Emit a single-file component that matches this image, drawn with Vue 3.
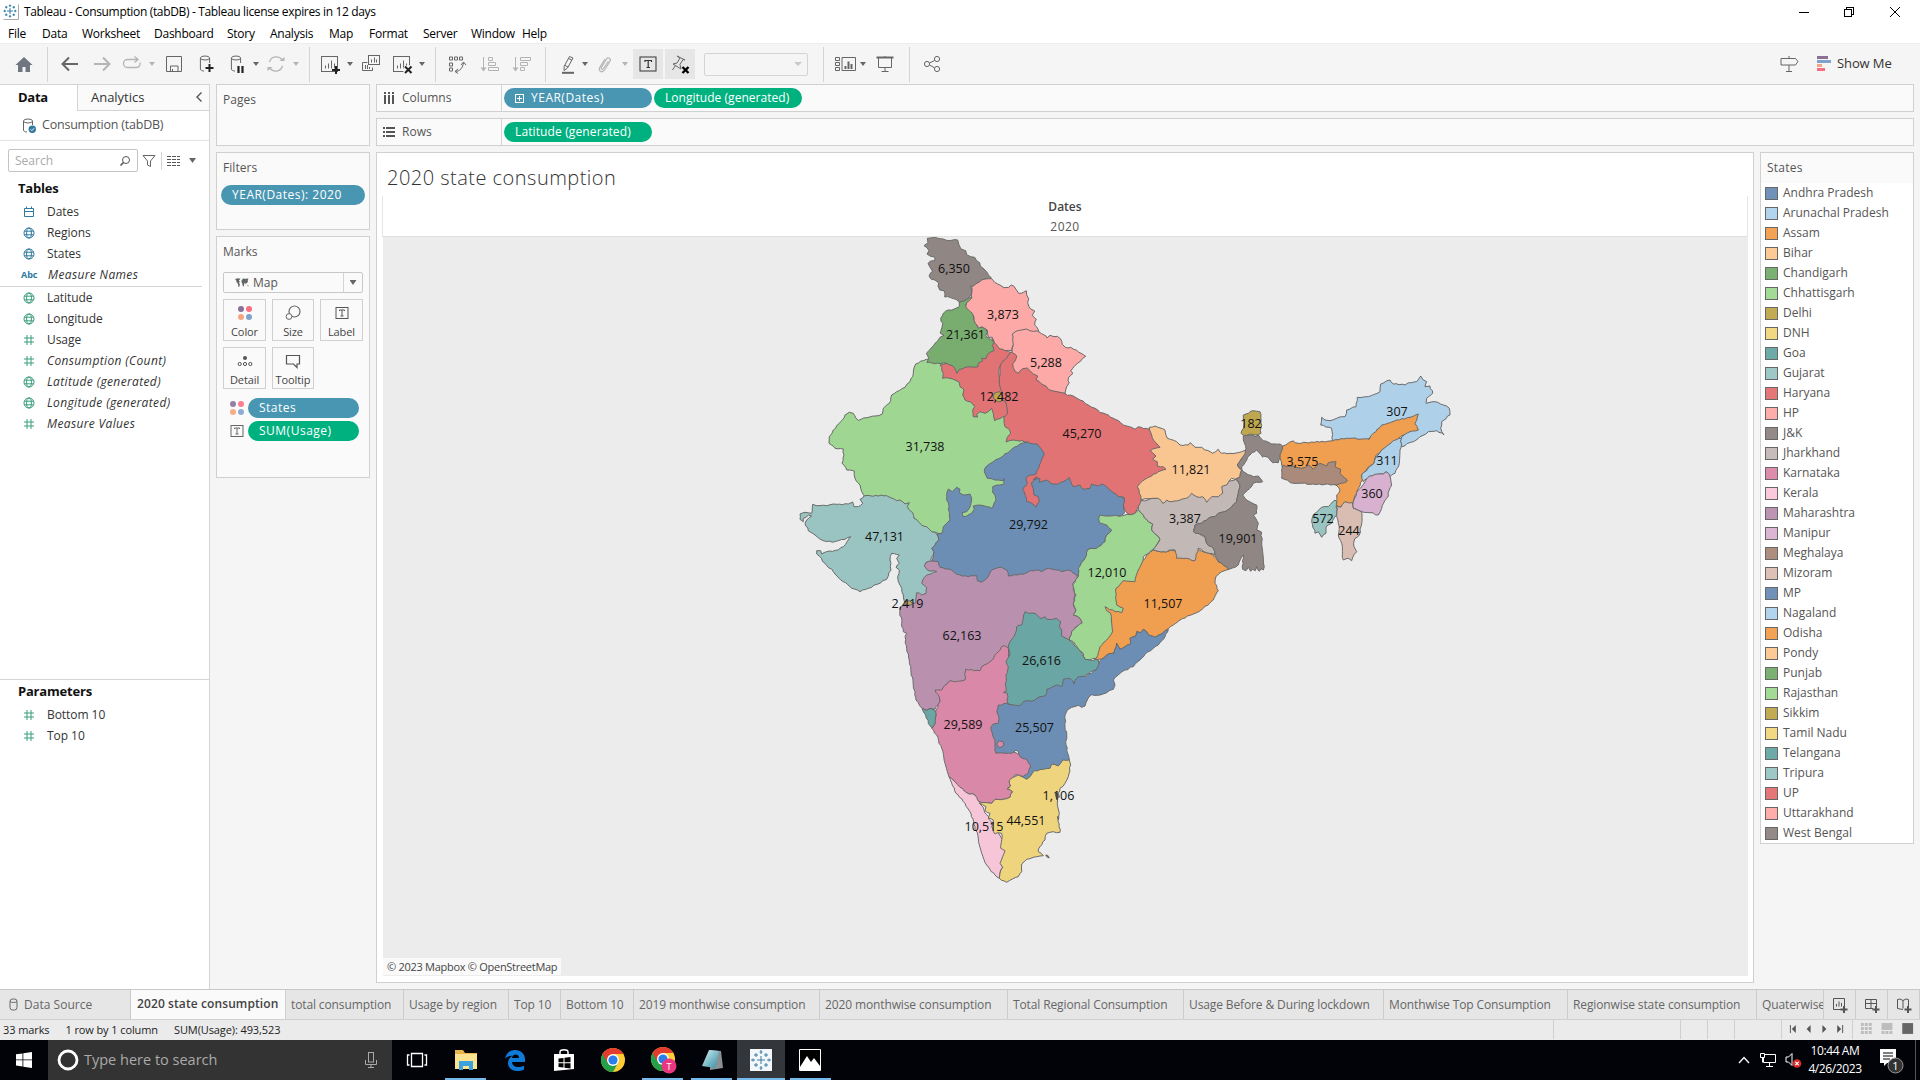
<script setup>
const ORIGINS = { A: [800, 230], B: [790, 480], C: [880, 660], D: [1080, 370], E: [1050, 590] }

// Turns "A x,y x,y B x,y" (tile letter, then points in thirds of a pixel) into a path with a slightly ragged outline.
function outline(src) {
  let o = ORIGINS.A
  const pts = []
  for (const t of src.trim().split(/\s+/)) {
    if (ORIGINS[t]) { o = ORIGINS[t]; continue }
    const [x, y] = t.split(',').map(Number)
    pts.push([o[0] + x / 3, o[1] + y / 3])
  }
  const out = []
  const noise = (a, b, k) => {
    const s = Math.sin((a[0] + b[0]) * 12.9898 + (a[1] + b[1]) * 78.233 + k * 37.7) * 43758.5453
    return (s - Math.floor(s)) * 2 - 1
  }
  pts.forEach((p, i) => {
    const q = pts[(i + 1) % pts.length]
    out.push(p)
    const dx = q[0] - p[0], dy = q[1] - p[1], len = Math.hypot(dx, dy)
    const n = Math.floor(len / 2.6)
    for (let k = 1; k < n; k++) {
      const f = k / n
      const flip = p[0] + p[1] * 0.01 < q[0] + q[1] * 0.01
      const kk = flip ? k : n - k
      const a = noise(p, q, kk) * 0.75 * (flip ? 1 : -1)
      out.push([p[0] + dx * f - (dy / len) * a, p[1] + dy * f + (dx / len) * a])
    }
  })
  return 'M' + out.map(p => p[0].toFixed(1) + ',' + p[1].toFixed(1)).join('L') + 'Z'
}

const shapes = [
  ['#9fd692', 'A 347,402 379,388 430,395 500,450 540,530 600,540 630,560 640,600 668,632 690,660 650,700 B 600,110 520,150 450,162 400,150 300,90 222,48 A 192,797 185,785 180,765 165,745 163,723 140,720 126,700 132,675 130,657 105,655 87,640 88,620 100,600 122,575 135,555 148,547 160,550 168,565 175,571 200,563 225,558 247,552 250,535 268,520 275,495 290,485 315,472 330,455 340,430'],
  ['#ba90af', 'B 425,243 460,240 700,250 850,270 862,292 848,310 855,345 850,375 858,390 850,405 870,415 877,428 858,440 845,455 838,480 800,500 700,520 670,560 600,600 500,650 448,650 C 178,110 180,125 165,148 150,145 140,150 126,145 108,120 100,80 92,20 88,0 B 350,505 345,470 350,460 340,455 335,430 330,390 332,380 350,366 370,330 385,300 395,270 408,247'],
  ['#99c4c1', 'B 222,48 240,47 290,47 320,62 330,60 345,72 358,68 352,80 358,90 368,98 372,115 385,125 395,135 410,140 425,155 440,162 447,180 435,195 425,205 432,215 422,240 408,247 403,258 412,270 440,275 425,281 410,285 398,300 395,310 410,322 408,340 395,345 380,338 378,352 378,368 360,375 345,370 340,345 335,325 325,305 323,290 328,270 318,262 328,250 320,235 328,225 305,220 300,240 303,270 290,298 270,310 235,325 210,335 185,325 160,305 130,275 105,250 80,222 80,212 92,212 95,222 110,215 145,210 160,200 182,170 165,178 145,182 128,187 100,182 75,165 55,152 45,130 50,120 65,108 55,105 40,115 40,125 30,118 30,102 45,97 65,100 68,73 90,77 110,77 140,73 175,72 188,66 192,80 205,80 218,70 210,58'],
  ['#6c8eb4', 'B 440,162 455,160 460,140 470,130 480,120 478,105 477,80 470,60 470,40 475,27 487,35 500,22 510,28 508,38 520,45 540,42 545,55 543,70 538,85 530,95 516,98 520,110 545,100 553,88 550,78 565,75 590,80 605,85 612,70 618,60 615,45 608,38 608,20 630,15 643,12 A 612,745 608,752 585,750 562,745 553,725 560,708 580,695 610,678 635,658 660,642 680,637 712,642 760,690 800,700 B 940,10 1003,55 1003,100 985,108 960,115 960,125 965,150 950,165 945,185 920,205 895,208 885,235 870,260 865,290 850,280 835,270 815,275 800,270 775,265 755,275 740,270 720,272 700,283 655,288 650,270 635,262 605,270 595,290 575,307 562,302 560,287 535,290 500,283 485,270 450,262 445,245 425,243 432,215 425,205 435,195 447,180'],
  ['#f09e50', 'D 218,540 250,545 350,535 380,548 400,555 415,575 430,585 447,598 425,605 408,620 405,640 415,662 400,690 E 460,55 440,68 412,78 390,90 370,105 355,116 345,122 335,132 315,142 300,137 290,125 280,118 272,128 260,125 258,138 240,145 242,162 225,170 210,178 200,160 192,190 175,192 155,207 132,208 120,180 150,120 150,60 D 100,700 100,640 160,600'],
  ['#9fd692', 'B 930,105 960,108 1003,106 D 150,434 165,430 175,420 185,430 205,455 218,462 215,480 240,508 230,525 218,540 190,560 185,580 175,600 165,635 130,632 108,655 108,690 110,705 130,715 125,728 105,725 75,710 B 945,380 950,392 962,400 965,430 968,455 950,480 930,500 918,535 900,540 885,538 880,520 865,508 850,485 838,480 845,455 860,440 877,428 870,415 850,405 858,390 850,370 858,345 848,315 858,298 865,290 865,265 885,235 895,208 920,205 945,185 950,165 965,150 950,135 928,128 926,115'],
  ['#c2b8b5', 'D 175,418 178,395 240,380 440,335 468,328 480,345 475,370 470,395 455,410 435,425 415,430 405,440 385,445 365,460 345,465 340,480 355,490 375,500 380,520 400,535 405,555 380,548 355,535 345,572 320,565 290,565 285,540 250,545 218,540 240,508 215,480 218,462 205,455 185,430'],
  ['#f9c692', 'D 208,172 225,168 255,180 262,205 290,215 300,225 325,225 330,218 345,232 365,232 375,240 398,250 415,238 425,250 450,250 485,245 498,240 500,250 482,270 472,285 485,300 480,320 465,328 455,325 440,345 425,350 428,370 415,380 395,380 380,397 368,380 350,380 335,370 325,382 300,390 275,395 260,390 248,400 235,385 220,385 183,390 170,370 160,340 200,300 200,240'],
  ['#e17375', 'A 632,366 600,400 597,460 600,500 610,530 612,570 615,590 628,598 632,610 622,622 618,636 640,630 668,632 690,640 712,642 722,655 733,672 724,690 718,705 712,720 707,733 690,735 678,745 682,760 668,780 675,795 680,815 695,820 708,832 718,815 715,800 702,795 700,775 695,757 712,740 700,750 720,745 718,757 740,750 755,762 775,762 790,755 808,743 812,755 820,770 840,765 850,778 870,775 875,762 895,768 905,762 920,770 940,788 955,800 D 133,383 130,405 134,420 150,434 165,430 170,420 183,390 178,370 172,350 180,340 195,328 215,318 235,305 258,298 250,290 232,288 232,275 218,268 228,258 210,242 225,235 240,232 222,212 215,195 208,178 175,170 165,178 140,168 122,158 100,145 85,135 60,128 45,115 25,105 0,90 A 820,498 802,496 795,490 740,450 690,400 650,365'],
  ['#e17375', 'A 576,325 590,338 600,355 625,364 632,368 622,382 608,394 600,408 597,425 597,455 600,470 606,485 602,500 607,510 617,515 620,528 623,550 615,560 600,566 584,572 580,550 575,535 565,545 555,550 540,545 530,553 533,561 520,560 518,540 524,530 510,515 495,510 488,495 492,480 480,470 478,457 465,450 450,445 428,445 430,430 420,405 440,400 470,400 540,370 575,345'],
  ['#78ad6f', 'A 478,216 486,213 503,206 515,200 513,210 500,218 497,228 512,240 520,255 524,275 533,292 546,292 558,298 562,308 557,318 572,328 582,337 577,346 582,362 566,370 560,378 558,386 545,385 548,392 535,400 534,410 520,412 510,410 495,412 478,418 471,430 464,415 458,407 440,400 420,401 381,398 386,385 379,370 395,352 405,340 420,322 432,316 421,310 426,292 428,280 422,265 430,250 445,240 465,236 478,230'],
  ['#908784', 'A 372,47 384,38 382,25 405,21 430,27 455,31 473,30 477,45 483,57 497,62 500,74 512,80 524,82 530,92 539,98 541,108 552,117 562,128 574,143 566,149 553,147 545,152 530,161 520,170 511,167 515,180 515,195 503,206 490,214 478,216 468,208 452,203 434,201 432,182 419,180 414,168 416,158 404,150 393,147 387,138 392,128 398,124 390,112 384,100 392,93 404,92 405,82 390,78 381,72 387,62'],
  ['#fca9a7', 'A 515,170 528,161 545,150 555,147 575,146 584,157 600,165 612,173 626,172 634,165 641,168 649,179 656,190 664,190 679,182 680,195 686,206 683,218 686,228 691,236 704,243 697,256 703,263 709,268 704,285 715,300 718,310 680,330 640,345 635,362 615,362 600,357 590,345 580,330 577,322 565,322 562,300 545,290 535,295 526,280 522,262 515,248 497,230 500,218 515,205'],
  ['#fca9a7', 'A 637,312 648,304 665,300 680,297 700,304 712,303 725,311 738,318 741,324 750,316 762,320 772,319 782,327 787,343 796,352 812,352 830,361 843,370 857,379 847,386 833,399 822,410 812,423 819,430 806,442 804,452 808,458 800,470 795,490 780,487 765,484 756,482 745,478 738,468 722,460 708,450 713,438 700,432 690,422 682,414 668,416 655,430 645,424 640,413 638,402 645,393 650,378 636,368 637,355 640,345 638,330'],
  ['#c0a54f', 'A 582,490 600,485 607,500 603,515 592,515 580,505'],
  ['#d988a7', 'C 165,90 185,90 205,65 255,60 257,28 300,32 305,20 330,5 B 640,497 655,505 C 390,20 390,130 380,270 460,300 450,340 430,350 405,345 400,355 388,362 392,378 382,385 398,395 390,412 370,418 345,418 335,430 320,428 298,425 285,405 260,398 240,382 225,365 207,350 195,310 185,265 170,225 155,205 165,190 168,150 180,125 178,110'],
  ['#6aa7a4', 'B 705,395 715,400 735,400 750,415 765,410 770,418 800,415 812,425 808,440 815,450 815,468 828,475 838,480 850,490 868,510 885,538 900,540 925,540 930,560 800,640 C 420,150 383,130 382,100 370,97 378,95 378,45 385,20 378,5 B 660,520 655,500 660,485 672,470 680,440 695,435 700,415'],
  ['#6c8eb4', 'E 355,118 345,140 330,158 310,175 285,192 270,210 250,230 225,240 205,255 190,270 195,285 190,298 170,308 150,315 125,314 112,330 105,348 95,352 85,346 65,352 C 562,150 555,165 555,200 560,225 558,255 563,280 568,300 550,310 535,325 510,335 460,340 450,350 440,358 428,350 445,340 452,318 440,298 420,290 415,275 408,270 395,280 375,280 360,278 348,280 345,262 345,240 338,225 333,200 340,192 355,190 357,175 350,155 355,135 380,130 420,137 430,125 465,120 480,110 498,105 500,88 E 20,285 35,290 40,268 60,265 72,282 75,270 85,260 110,258 138,240 150,212 175,192 192,190 200,160 210,178 225,170 242,162 240,145 258,138 260,125 272,128 280,118 290,125 300,137 315,142 335,132 345,122'],
  ['#d988a7', 'C 350,252 358,242 370,246 372,256 358,264'],
  ['#6aa7a4', 'C 126,145 140,152 150,145 163,150 168,165 166,190 155,203 145,190 137,165'],
  ['#f6c6d8', 'C 207,350 225,365 240,382 260,398 285,405 300,428 340,500 380,560 358,655 345,645 320,615 305,580 295,535 285,500 270,455 255,430 228,400 215,370'],
  ['#efd47e', 'C 568,300 572,315 565,350 555,370 540,385 535,400 532,430 538,460 535,475 540,517 520,515 500,520 495,540 480,560 475,575 490,587 460,592 440,598 425,612 425,635 415,650 380,667 358,655 360,640 368,622 360,610 368,590 375,572 362,565 365,520 352,518 345,522 335,500 340,480 325,475 330,460 315,452 318,440 298,430 320,428 335,430 345,418 370,418 390,412 398,395 382,388 392,378 388,362 400,352 415,345 430,352 440,358 450,350 462,332 490,328 510,325 515,312 535,318 548,300'],
  ['#908784', 'D 490,198 510,195 525,200 535,195 550,212 575,222 600,222 608,228 605,255 595,278 578,278 565,262 550,258 548,262 530,240 510,255 500,270 485,290 490,305 520,320 535,318 548,335 520,340 510,355 488,375 495,385 530,405 530,430 520,435 535,460 530,480 545,487 545,525 553,590 550,600 543,596 538,604 530,590 526,602 518,598 512,604 505,592 498,602 488,598 490,555 475,585 447,598 430,585 415,575 405,555 400,535 380,520 375,500 340,485 345,465 365,460 385,445 405,440 415,430 435,425 455,410 470,395 475,370 480,345 468,328 480,320 485,300 472,285 482,270 495,250 498,235 490,210'],
  ['#bfa74f', 'D 490,135 520,122 540,125 543,150 543,190 525,195 510,192 490,196 483,190 492,165'],
  ['#aed0e8', 'D 725,142 735,150 750,152 770,145 795,140 800,120 828,110 832,82 865,80 900,65 902,42 930,30 940,42 975,45 985,38 1010,35 1022,18 1030,30 1040,35 1035,50 1050,48 1058,70 1040,85 1038,100 1065,95 1090,105 1108,115 1110,135 1085,155 1082,175 1092,195 1070,182 1045,185 1020,200 1000,215 965,230 962,205 1000,160 900,190 860,210 800,210 758,212 755,175 722,165'],
  ['#f09e50', 'D 608,228 640,213 655,220 750,213 800,205 868,208 880,190 905,165 950,150 990,142 1015,132 1005,160 1015,180 990,185 950,210 905,240 885,262 882,280 870,288 845,315 848,330 835,355 820,395 810,405 795,395 780,412 768,405 770,375 780,360 768,345 700,320 610,310 605,285 600,255'],
  ['#aa8b7b', 'D 610,285 605,300 605,325 640,340 700,342 770,345 800,335 802,330 780,310 782,298 765,290 768,275 745,278 740,288 720,280 700,298 685,285 665,295 640,288 620,290'],
  ['#aed0e8', 'D 965,205 960,240 958,280 945,310 930,320 918,305 910,312 885,315 868,320 850,335 845,315 868,290 882,280 888,262 905,240 940,212'],
  ['#d7b1cf', 'D 868,318 885,313 910,312 918,305 930,318 935,345 920,385 905,415 895,435 870,428 845,425 820,415 820,395 835,360 855,335'],
  ['#99c4c1', 'D 770,395 765,390 745,410 725,412 712,425 700,435 695,455 705,490 715,485 725,502 738,490 738,470 755,460 770,435'],
  ['#dabdb2', 'D 770,408 782,412 795,395 818,398 820,415 845,425 845,460 838,495 825,505 822,530 830,545 815,572 805,565 790,570 785,520 775,495 778,470 770,440'],
  ['#c9a560', 'B 345,364 358,362 368,370 360,376 346,374'],
  ['#8f8166', 'C 526,400 536,402 538,412 530,416'],
  ['#8f8166', 'C 497,585 503,586 508,594 500,590'],
  ['#8f8166', 'C 532,470 537,472 535,480'],
].map(([fill, s]) => ({ fill, d: outline(s) }))

const labels = [
  ['6,350', 954, 269], ['3,873', 1003, 315], ['21,361', 965.5, 335], ['5,288', 1046, 363], ['12,482', 999, 397],
  ['45,270', 1082, 434], ['31,738', 925, 447], ['29,792', 1028.5, 525], ['47,131', 884.5, 537], ['2,419', 907.5, 604],
  ['62,163', 962, 636], ['26,616', 1041.5, 661], ['12,010', 1107, 573], ['11,821', 1191, 470], ['3,387', 1185, 519],
  ['19,901', 1238, 539], ['11,507', 1163, 604], ['182', 1251, 424], ['307', 1397, 412], ['3,575', 1302.5, 462],
  ['311', 1387, 461], ['360', 1372, 494], ['572', 1323, 519], ['244', 1349, 531], ['29,589', 963, 725],
  ['25,507', 1034.5, 728], ['1,106', 1058.5, 796], ['44,551', 1026, 821], ['10,515', 984, 827],
]

const legend = [
  ['Andhra Pradesh', '#7092b8'], ['Arunachal Pradesh', '#b2d4ec'], ['Assam', '#f4a254'], ['Bihar', '#fdca96'],
  ['Chandigarh', '#7bb173'], ['Chhattisgarh', '#a3da96'], ['Delhi', '#c3ab53'], ['DNH', '#f3d882'],
  ['Goa', '#6daba8'], ['Gujarat', '#9dc8c5'], ['Haryana', '#e57779'], ['HP', '#ffadab'], ['J&K', '#948b88'],
  ['Jharkhand', '#c6bcb9'], ['Karnataka', '#dd8cab'], ['Kerala', '#facadc'], ['Maharashtra', '#be94b3'],
  ['Manipur', '#dbb5d3'], ['Meghalaya', '#ae8f7f'], ['Mizoram', '#dec1b6'], ['MP', '#7092b8'],
  ['Nagaland', '#b2d4ec'], ['Odisha', '#f4a254'], ['Pondy', '#fdca96'], ['Punjab', '#7bb173'],
  ['Rajasthan', '#a3da96'], ['Sikkim', '#c3ab53'], ['Tamil Nadu', '#f3d882'], ['Telangana', '#6daba8'],
  ['Tripura', '#9dc8c5'], ['UP', '#e57779'], ['Uttarakhand', '#ffadab'], ['West Bengal', '#948b88'],
]

const menus = ['File', 'Data', 'Worksheet', 'Dashboard', 'Story', 'Analysis', 'Map', 'Format', 'Server', 'Window', 'Help']
const menuWidths = [34, 40, 72, 73, 43, 59, 40, 54, 48, 51, 40]

const dims = [['cal', 'Dates'], ['globe', 'Regions'], ['globe', 'States'], ['abc', 'Measure Names', 1]]
const measures = [['globe', 'Latitude'], ['globe', 'Longitude'], ['hash', 'Usage'], ['hash', 'Consumption (Count)', 1],
  ['globe', 'Latitude (generated)', 1], ['globe', 'Longitude (generated)', 1], ['hash', 'Measure Values', 1]]

const sheet = (x, y) => `<rect x="${x}" y="${y}" width="16" height="15"/><path d="M${x + 4} ${y + 12}v-3M${x + 7} ${y + 12}v-5M${x + 10} ${y + 12}v-8M${x + 13} ${y + 12}v-5"/>`
const db = '<ellipse cx="10" cy="5" rx="4.6" ry="2"/><path d="M5.4 5v11c0 1.4 2 2 3.6 2M14.6 5v5"/>'
const icons = {
  home: '<path d="M11 4L2.500 12H5v7h4.500v-5h3v5H17v-7h2.500z" fill="#6f7680" stroke="none"/>',
  back: '<path d="M19 11H4M10 4.500L3.500 11l6.500 6.500" stroke-width="2"/>',
  fwd: '<path d="M3 11h15M12 4.500l6.500 6.500-6.500 6.500" stroke="#b4b4b4" stroke-width="2"/>',
  replay: '<path d="M16.500 6.500H6.500a4 4 0 0 0 0 8h9c3 0 4-2.500 3.500-5M13.500 3.500l3.500 3-3.500 3" stroke="#b4b4b4" stroke-width="1.300"/>',
  save: '<path d="M3.500 3.500h15v15h-15zM7.500 18v-5h7.500v5M9.500 18v-2"/>',
  dbplus: db + '<path d="M14.500 11v8M10.500 15h8" stroke="#222" stroke-width="2"/>',
  dbpause: db + '<path d="M12.500 13v7M16.500 13v7" stroke="#222" stroke-width="2.200"/>',
  refresh: '<path d="M4.500 9a7.200 7.200 0 0 1 12.500-2.500M17.500 13A7.200 7.200 0 0 1 5 15.500" stroke="#b4b4b4" stroke-width="1.300"/><path d="M14.500 8h5V4zM7.500 14h-5v4z" fill="#b4b4b4" stroke="none"/>',
  sheet: sheet(2.500, 3.500) + '<path d="M17 13v8M13 17h8" stroke="#222" stroke-width="2"/>',
  dup: '<path d="M7.500 9.500h-5v8h10v-3M5.500 12v4M7.500 12v4M9.500 14v2"/><rect x="8.500" y="2.500" width="11" height="9"/><path d="M11.500 9.500v-3M14.500 9.500v-5M16.500 9.500v-3"/>',
  clear: sheet(2.500, 3.500) + '<path d="M13.500 13.500l6.500 6.500M20 13.500l-6.500 6.500" stroke="#f5f5f5" stroke-width="4"/><path d="M14 13.500l6.500 6.500M20.500 13.500l-6.500 6.500" stroke="#222" stroke-width="2"/>',
  swap: '<path d="M3.500 4h3v3h-3zM8.500 4h3v3h-3zM13.500 4h3v3h-3zM3.500 10h3v3h-3zM3.500 15h3v3h-3zM9 18.500c5 0 8-4 8.500-9M15 12l2.500-3 2.500 3M12 16l-3 2.500 3 2"/>',
  asc: '<path d="M4.500 4v13M9.500 4.500h4v3h-4zM9.500 9.500h7v3h-7zM9.500 14.500h10v3h-10z" stroke="#b4b4b4"/><path d="M1.500 14.500h6l-3 4z" fill="#b4b4b4" stroke="none"/>',
  desc: '<path d="M5.500 4v13M10.500 4.500h10v3h-10zM10.500 9.500h7v3h-7zM10.500 14.500h4v3h-4z" stroke="#b4b4b4"/><path d="M2.500 14.500h6l-3 4z" fill="#b4b4b4" stroke="none"/>',
  pen: '<path d="M12.500 3.500l3.500 1.500-5.500 10-3.500 2.500.2-4.200zM8 12.500l3 1.500M11.500 5.500l3.300 1.600"/><path d="M5 19.800h12" stroke-width="2"/>',
  clip: '<path d="M14.500 8L9.500 15.500c-1 1.500-3 .5-2-1.200L12.500 6c1.500-2.300 5-.5 3.500 2.200L10.500 17c-2.500 3.500-7 1-4.500-3L11 6" stroke="#b4b4b4" stroke-width="1.200"/>',
  tbox: '<rect x="3" y="4" width="16" height="14" stroke="#333"/><path d="M8 9V7.500h6.500V9M11.200 7.500v7M9.500 14.500h3.500" stroke="#333" stroke-width="1.200"/>',
  pin: '<path d="M8 3l8 4-2-.5-3 5 1 4.500-8-5 4-1 3-5zM6.500 12.500L3.500 17"/><path d="M13.500 14l6 6M19.500 14l-6 6" stroke="#000" stroke-width="2.400"/>',
  cards: '<path d="M.5 4.500h4v3h-4zM.5 9.500h4v3h-4zM.5 14.500h4v3h-4zM7 4.500h13.500v13H7z"/><path d="M10.500 16v-3M13.500 16V8.500M16.500 16v-5" stroke-width="2"/>',
  present: '<path d="M2.500 4.500h17" stroke-width="2"/><path d="M4.500 5v9.500h13V5M11 14.500v4M7.500 18.500h7M11 3v1"/>',
  share: '<circle cx="6" cy="11" r="2.600"/><circle cx="16" cy="6" r="2.600"/><circle cx="16" cy="16" r="2.600"/><path d="M8.500 10l5-2.500M8.500 12l5 2.800"/>',
  sign: '<path d="M11 3v16M8 18.500h6"/><path d="M3 5.500h14.500l2.500 3-2.500 3.500H3z" fill="#f5f5f5"/>',
}
// [kind, gap before it in px]
const tools = [
  ['home', 13], ['|', 12], ['back', 11], ['fwd', 10], ['replay', 8], ['v-', 6], ['save', 8], ['dbplus', 10], ['dbpause', 9],
  ['v', 5], ['refresh', 6], ['v-', 6], ['|', 10], ['sheet', 9], ['v', 6], ['dup', 7], ['clear', 9], ['v', 6], ['|', 10],
  ['swap', 10], ['asc', 11], ['desc', 9], ['|', 13], ['pen', 11], ['v', 3], ['clip', 6], ['v-', 6], ['tbox', 5], ['pin', 2],
  ['sel', 9], ['|', 15], ['cards', 11], ['v', 3], ['present', 8], ['|', 13], ['share', 11],
]

const small = {
  cal: '<path d="M2.500 3.500h9v8h-9zM2.500 6.500h9M4.500 1.500v2M9.500 1.500v2"/>',
  globe: '<circle cx="7" cy="7" r="5"/><ellipse cx="7" cy="7" rx="2.400" ry="5"/><path d="M2.300 5.200h9.400M2.300 8.800h9.400"/>',
  hash: '<path d="M5 2v10M9 2v10M2 5h10M2 9h10"/>',
}

const tabs = [['total consumption', 118], ['Usage by region', 105], ['Top 10', 52], ['Bottom 10', 73], ['2019 monthwise consumption', 186],
  ['2020 monthwise consumption', 188], ['Total Regional Consumption', 176], ['Usage Before & During lockdown', 200],
  ['Monthwise Top Consumption', 184], ['Regionwise state consumption', 189], ['Quaterwise', 67]]
</script>

<template>
  <div class="app">
    <header class="titlebar">
      <svg class="logo" width="16" height="16" viewBox="0 0 16 16"><path d="M.5 15.500h15V.5" stroke="#aaa" fill="none"/><path d="M7 4v6M4 7h6M7 .5v2.500M5.800 1.700h2.400M7 11v2.500M5.800 12.300h2.400M.5 7H3M1.700 5.800v2.400M11 7h2.500M12.300 5.800v2.400M3.200 2v2.500M2 3.200h2.500M10.800 2v2.500M9.500 3.200H12M3.200 9.500V12M2 10.800h2.500M10.800 9.500V12M9.500 10.800H12" stroke="#2f7ca8" fill="none"/></svg>
      <span class="wtitle">Tableau - Consumption (tabDB) - Tableau license expires in 12 days</span>
      <svg class="winbtns" width="130" height="20" viewBox="0 0 130 20" fill="none" stroke="#000" shape-rendering="crispEdges"><path d="M9 10.500h10"/><path d="M54.500 7.500h7v7h-7zM56.500 7V5.500h7v7H62"/><path d="M100 5l10 10M110 5l-10 10" shape-rendering="auto"/></svg>
    </header>
    <nav class="menubar"><span v-for="(m, i) in menus" :key="m" :style="{ width: menuWidths[i] + 'px' }">{{ m }}</span></nav>

    <div class="toolbar">
      <template v-for="([k, g], i) in tools" :key="i">
        <i v-if="k === '|'" class="sep" :style="{ marginLeft: g + 'px' }"></i>
        <i v-else-if="k[0] === 'v'" class="caret" :class="{ dim: k === 'v-' }" :style="{ marginLeft: g + 'px' }"></i>
        <span v-else-if="k === 'sel'" class="combo" :style="{ marginLeft: g + 'px' }"><i></i></span>
        <span v-else class="tool" :class="{ on: k === 'tbox' || k === 'pin' }" :style="{ marginLeft: g + 'px' }">
          <svg width="22" height="22" viewBox="0 0 22 22" v-html="icons[k]"></svg>
        </span>
      </template>
      <span class="tool sign"><svg width="22" height="22" viewBox="0 0 22 22" v-html="icons.sign"></svg></span>
      <svg class="bars" width="15" height="16" viewBox="0 0 15 16"><path fill="#8a7096" d="M0 0h11v3H0z"/><path fill="#7fa3cc" d="M0 4h14v3H0z"/><path fill="#f5a57f" d="M0 8h5v3H0z"/><path fill="#f86e80" d="M0 12h8v3H0z"/></svg>
      <span class="showme">Show Me</span>
    </div>

    <main class="work">
      <aside class="side">
        <div class="sidetabs"><div class="tdata">Data</div><div class="tana">Analytics<svg width="8" height="12" viewBox="0 0 8 12"><path d="M6.500 1.500L2 6l4.500 4.500" fill="none" stroke="#555" stroke-width="1.400"/></svg></div></div>
        <div class="source">
          <svg width="16" height="18" viewBox="0 0 16 18"><g fill="none" stroke="#666"><ellipse cx="6" cy="4" rx="4.500" ry="2"/><path d="M1.500 4v9c0 1.300 1.500 2 3.500 2M10.500 4v4"/></g><circle cx="10.300" cy="12.300" r="3.700" fill="#2f7a9e"/><path d="M8.600 12.300l1.300 1.300 2.200-2.300" stroke="#fff" fill="none"/></svg>
          <span>Consumption (tabDB)</span>
        </div>
        <div class="searchrow">
          <div class="search"><span>Search</span><svg width="12" height="12" viewBox="0 0 12 12" fill="none" stroke="#555"><circle cx="7" cy="5" r="3.500"/><path d="M4.500 7.500L1.500 10.500" stroke-width="1.600"/></svg></div>
          <svg class="funnel" width="14" height="14" viewBox="0 0 14 14" fill="none" stroke="#666"><path d="M1 1.500h12L8.500 7v5.500l-3-1.500V7z"/></svg>
          <i class="vline"></i>
          <svg width="13" height="10" viewBox="0 0 13 10" stroke="#555" shape-rendering="crispEdges"><path d="M0 .5h13M0 3.500h13M0 6.500h13M0 9.500h13" stroke-dasharray="4 1"/></svg>
          <i class="caret big"></i>
        </div>
        <h4>Tables</h4>
        <ul class="fields dims">
          <li v-for="f in dims" :key="f[1]"><span v-if="f[0] === 'abc'" class="abc">Abc</span><svg v-else width="14" height="14" viewBox="0 0 14 14" v-html="small[f[0]]"></svg><span :class="{ it: f[2] }">{{ f[1] }}</span></li>
        </ul>
        <ul class="fields mea">
          <li v-for="f in measures" :key="f[1]"><svg width="14" height="14" viewBox="0 0 14 14" v-html="small[f[0]]"></svg><span :class="{ it: f[2] }">{{ f[1] }}</span></li>
        </ul>
        <div class="params">
          <h4>Parameters</h4>
          <ul class="fields mea2">
            <li v-for="p in ['Bottom 10', 'Top 10']" :key="p"><svg width="14" height="14" viewBox="0 0 14 14" v-html="small.hash"></svg><span>{{ p }}</span></li>
          </ul>
        </div>
      </aside>

      <section class="cards">
        <div class="card pages"><h5>Pages</h5></div>
        <div class="card filters"><h5>Filters</h5><div class="pill blue">YEAR(Dates): 2020</div></div>
        <div class="card marks">
          <h5>Marks</h5>
          <div class="marktype">
            <svg width="14" height="10" viewBox="0 0 14 10" fill="#666"><path d="M0 1l3-.8L5.500.8 4 2.500 4.800 4l-1 1L5 6l-.8 3H3.500L3 6 1.500 4 1.200 2.500zM6.500 2.500L8 .5l2 .3L13.500.6l-.8 2 .3 1.400-1.500 1-.5 1.500L10 5 9.200 5.500 9 8 8 8.500 7.200 5.500 6.500 4zM12 7.500l1.500-.5-.3 1.500z"/></svg>
            <span>Map</span><b><i class="caret big"></i></b>
          </div>
          <div class="mbtns">
            <div><svg width="16" height="16" viewBox="0 0 16 16"><circle cx="4" cy="4" r="3" fill="#8a7096"/><circle cx="12" cy="4" r="3" fill="#f86e80"/><circle cx="4" cy="12" r="3" fill="#f5a57f"/><circle cx="12" cy="12" r="3" fill="#7fa3cc"/></svg><span>Color</span></div>
            <div><svg width="16" height="16" viewBox="0 0 16 16" fill="none" stroke="#666"><circle cx="9.500" cy="6.500" r="5.500" stroke-width="1.200"/><circle cx="4" cy="11.500" r="2.900" fill="#fafafa"/></svg><span>Size</span></div>
            <div><svg width="16" height="16" viewBox="0 0 16 16" fill="none" stroke="#555"><rect x="2" y="2.500" width="12" height="11"/><path d="M5.500 6V5h5v1M8 5v6M6.500 11h3"/></svg><span>Label</span></div>
            <div><svg width="16" height="16" viewBox="0 0 16 16" fill="none" stroke="#555"><circle cx="8" cy="5" r="2" fill="#555" stroke="none"/><circle cx="2.700" cy="11" r="1.600"/><circle cx="8" cy="11" r="1.600"/><circle cx="13.300" cy="11" r="1.600"/></svg><span>Detail</span></div>
            <div><svg width="16" height="16" viewBox="0 0 16 16" fill="none" stroke="#555" stroke-width="1.200"><path d="M1.500 2.500h13v8.500h-2.500v3.500L8.500 11h-7z"/></svg><span>Tooltip</span></div>
          </div>
          <div class="enc"><svg width="16" height="16" viewBox="0 0 16 16"><circle cx="4" cy="4" r="3" fill="#957fa2"/><circle cx="12" cy="4" r="3" fill="#fa7f8e"/><circle cx="4" cy="12" r="3" fill="#f5ae87"/><circle cx="12" cy="12" r="3" fill="#8eadd2"/></svg><div class="pill blue">States</div></div>
          <div class="enc"><svg width="16" height="16" viewBox="0 0 16 16" fill="none" stroke="#666"><rect x="2" y="2.500" width="12" height="11"/><path d="M5.500 6V5h5v1M8 5v6M6.500 11h3"/></svg><div class="pill green">SUM(Usage)</div></div>
        </div>
      </section>

      <section class="main">
        <div class="shelf">
          <div class="sname"><svg width="12" height="12" viewBox="0 0 12 12" fill="#555"><path d="M1 0h2v2H1zM5 0h2v2H5zM9 0h2v2H9zM1 3h2v9H1zM5 3h2v9H5zM9 3h2v9H9z"/></svg>Columns</div>
          <div class="pill blue yr"><svg width="9" height="9" viewBox="0 0 9 9" fill="none" stroke="#fff" shape-rendering="crispEdges"><path d="M.5.5h8v8h-8zM2 4.500h5M4.500 2v5"/></svg>YEAR(Dates)</div>
          <div class="pill green">Longitude (generated)</div>
        </div>
        <div class="shelf">
          <div class="sname"><svg width="12" height="12" viewBox="0 0 12 12" fill="#555"><path d="M0 1h2v2H0zM0 5h2v2H0zM0 9h2v2H0zM3 1h9v2H3zM3 5h9v2H3zM3 9h9v2H3z"/></svg>Rows</div>
          <div class="pill green">Latitude (generated)</div>
        </div>
        <div class="lower">
          <div class="view">
            <h2>2020 state consumption</h2>
            <div class="colhead"><b>Dates</b><span>2020</span></div>
            <div class="mapbox">
              <svg class="map" width="1364" height="739" viewBox="383 237 1364 739">
                <g stroke="#6a6a6a" stroke-width="1" stroke-linejoin="round"><path v-for="(s, i) in shapes" :key="i" :d="s.d" :fill="s.fill"/></g>
                <g class="lab"><text v-for="l in labels" :key="l[0]" :x="l[1]" :y="l[2] + 3.800">{{ l[0] }}</text></g>
              </svg>
              <div class="credit">© 2023 Mapbox © OpenStreetMap</div>
            </div>
          </div>
          <div class="legend">
            <h5>States</h5>
            <ul><li v-for="l in legend" :key="l[0]"><i :style="{ background: l[1] }"></i>{{ l[0] }}</li></ul>
          </div>
        </div>
      </section>
    </main>

    <div class="tabs">
      <div class="ds"><svg width="9" height="13" viewBox="0 0 9 13" fill="none" stroke="#666"><rect x="1" y="1" width="7" height="11" rx="2.500"/><path d="M1 3.500c1 1.300 6 1.300 7 0"/></svg>Data Source</div>
      <div class="active">2020 state consumption</div>
      <div v-for="t in tabs" :key="t[0]" class="tab" :style="{ width: t[1] + 'px' }">{{ t[0] }}</div>
      <div class="addtab"><svg width="16" height="16" viewBox="0 0 16 16" fill="none" stroke="#555"><path d="M9 12.500H1.500v-11h11V9M4.500 9.500V7M7 9.500v-5M9.500 9.500V6"/><path d="M12 9v7M8.500 12.500h7" stroke-width="2"/></svg></div>
      <div class="addtab"><svg width="16" height="16" viewBox="0 0 16 16" fill="none" stroke="#555"><path d="M9 11.500H1.500v-9h11V9M7 2.500v9M1.500 6.500h11"/><path d="M12 9v7M8.500 12.500h7" stroke-width="2"/></svg></div>
      <div class="addtab"><svg width="16" height="16" viewBox="0 0 16 16" fill="none" stroke="#555"><path d="M7 12.500l-5.500-1v-9L4 2l3 1.500L10 2l2.500.5V9M7 3.500v8"/><path d="M12 9v7M8.500 12.500h7" stroke-width="2"/></svg></div>
    </div>
    <div class="status">
      <span>33 marks</span><span>1 row by 1 column</span><span>SUM(Usage): 493,523</span>
      <i class="c1"></i><i class="c2"></i><i class="c2"></i><i class="c3"></i>
      <svg class="nav" width="71" height="20" viewBox="0 0 71 20" fill="#555"><path d="M8 6h1v8H8zM14 6v8l-4-4zM29 6v8l-4-4zM41 6v8l4-4zM56 6v8l4-4zM61 6h1v8h-1z"/></svg>
      <svg class="sorter" width="67" height="20" viewBox="0 0 67 20"><g fill="#bdbdbd"><path d="M8 4h3v3H8zM12 4h3v3h-3zM16 4h3v3h-3zM8 8h3v3H8zM12 8h3v3h-3zM16 8h3v3h-3zM8 12h3v3H8zM12 12h3v3h-3zM16 12h3v3h-3zM29 4h11v7H29zM29 12h3v3h-3zM33 12h3v3h-3zM37 12h3v3h-3z"/></g><path d="M50 4h11v11H50z" fill="#666"/></svg>
    </div>

    <footer class="taskbar">
      <div class="start"><svg width="16" height="16" viewBox="0 0 16 16" fill="#fff"><path d="M0 2.300L6.500 1.400v6.100H0zM7.300 1.300L16 0v7.500H7.300zM0 8.300h6.500v6.200L0 13.600zM7.300 8.300H16V16l-8.700-1.300z"/></svg></div>
      <div class="cortana">
        <svg width="22" height="22" viewBox="0 0 22 22"><circle cx="11" cy="11" r="9" fill="none" stroke="#fff" stroke-width="2.800"/></svg>
        <span>Type here to search</span>
        <svg width="12" height="18" viewBox="0 0 12 18" fill="none" stroke="#aaa"><rect x="3.500" y="1.500" width="5" height="9.500"/><path d="M.5 9v4.500h11V9M6 13.500v3M3 16.500h6"/></svg>
      </div>
      <div class="app-i"><svg width="22" height="18" viewBox="0 0 22 18" fill="none" stroke="#fff" stroke-width="1.300"><path d="M5.500 2.500h11v13h-11zM3.500 4H1.500v10h2M18.500 4h2v10h-2"/></svg></div>
      <div class="app-i run"><svg width="24" height="22" viewBox="0 0 24 22"><path fill="#e8b64c" d="M1 1h8l2 3h12v16H1z"/><path fill="#fde38f" d="M1 5h22v15H1z"/><path fill="#3aa2dc" d="M5 12h14v9h-4v-4H9v4H5z"/></svg></div>
      <div class="app-i"><svg width="22" height="22" viewBox="0 0 22 22"><path fill="#0f7ad8" d="M1 10C2 4 6 1 11 1c6 0 10 4 10 9v3H8c0 3 3 5 6 5 2.500 0 4.500-.6 6-1.600v4C18 21.500 15.500 22 13 22 7 22 4 18 4 14c0-3.500 2-6 4.500-7.300C4.500 7 2 8.500 1 10zm7-1h7c0-2-1.300-3.500-3.400-3.500S8.300 7 8 9z"/></svg></div>
      <div class="app-i"><svg width="22" height="24" viewBox="0 0 22 24"><path d="M7 6V4c0-3 8-3 8 0v2" fill="none" stroke="#fff" stroke-width="1.500"/><path fill="#fff" d="M1 6h20v15L1 23z"/><path fill="#000" d="M5.500 10.500l5-.6v4.400h-5zM11.500 9.800l6-.8v5.300h-6zM5.500 15.200h5v4.400l-5-.6zM11.500 15.200h6v5.300l-6-.8z"/></svg></div>
      <div class="app-i"><svg width="24" height="24" viewBox="0 0 24 24"><circle cx="12" cy="12" r="12" fill="#fc3"/><path d="M12 12L1.600 6A12 12 0 0 0 12 24l5-9z" fill="#24a148"/><path d="M12 6h10.400A12 12 0 0 0 1.600 6L6.800 15z" fill="#e33b2e"/><circle cx="12" cy="12" r="6" fill="#fff"/><circle cx="12" cy="12" r="4.600" fill="#2b7de9"/></svg></div>
      <div class="app-i run"><svg width="24" height="28" viewBox="0 0 24 28"><g transform="translate(0 1)"><circle cx="12" cy="12" r="12" fill="#fc3"/><path d="M12 12L1.600 6A12 12 0 0 0 12 24l5-9z" fill="#24a148"/><path d="M12 6h10.400A12 12 0 0 0 1.600 6L6.800 15z" fill="#e33b2e"/><circle cx="12" cy="12" r="6" fill="#fff"/><circle cx="12" cy="12" r="4.600" fill="#2b7de9"/></g><circle cx="18" cy="20" r="7.500" fill="#e8377f"/><text x="18" y="23.500" fill="#fff" font-size="9" text-anchor="middle">T</text></svg></div>
      <div class="app-i run"><svg width="24" height="24" viewBox="0 0 24 24"><defs><linearGradient id="np" x1="0" y1="0" x2="1" y2="1"><stop offset="0" stop-color="#d7f1f5"/><stop offset="1" stop-color="#2e8ea3"/></linearGradient></defs><path d="M10 2l11 1 2 17-13 2z" fill="#8a9296"/><path d="M9 2l10 1-4 17-13-2z" fill="url(#np)"/></svg></div>
      <div class="app-i run cur"><svg width="22" height="22" viewBox="0 0 22 22"><path fill="#f4f7fa" d="M0 0h22v22H0z"/><path d="M11 7v8M7 11h8M11 1v4M9.500 3h3M11 17v4M9.500 19h3M1 11h4M3 9.500v3M17 11h4M19 9.500v3M6 4v4M4 6h4M16 4v4M14 6h4M6 14v4M4 16h4M16 14v4M14 16h4" stroke="#3c7ca8" fill="none"/></svg></div>
      <div class="app-i run"><svg width="22" height="22" viewBox="0 0 22 22"><path fill="#000" stroke="#fff" d="M.5.5h21v21H.5z"/><path fill="#fff" d="M1 18l7-11 4 6 3-4 6 8v4H1z"/></svg></div>
      <div class="tray">
        <svg width="12" height="8" viewBox="0 0 12 8"><path d="M1 7l5-5.500L11 7" fill="none" stroke="#fff" stroke-width="1.300"/></svg>
        <svg width="18" height="16" viewBox="0 0 18 16" fill="none" stroke="#fff"><path d="M5 2.500h11.500v8H4.500V6M10.500 10.500v3.500M7 14.500h7"/><path d="M1.500 1.500h4v4h-4zM3.500 5.500v5"/></svg>
        <svg width="18" height="16" viewBox="0 0 18 16"><path d="M0 5h2.500L6 1.500v12L2.500 10H0z" fill="none" stroke="#fff"/><circle cx="11" cy="11.500" r="4.300" fill="#dc2b2b"/><path d="M9.300 9.800l3.400 3.400M12.700 9.800l-3.400 3.400" stroke="#fff" stroke-width="1.200"/></svg>
        <div class="clock"><span>10:44 AM</span><span>4/26/2023</span></div>
        <svg class="notif" width="28" height="28" viewBox="0 0 28 28"><path d="M2 3h16v14H9l-3 3v-3H2z" fill="#fff"/><path d="M5 7h10M5 10h10M5 13h7" stroke="#000"/><circle cx="17.500" cy="19.500" r="7.500" fill="#333" stroke="#999"/><text x="17.500" y="23.500" fill="#fff" font-size="11" text-anchor="middle">1</text></svg>
        <i></i>
      </div>
    </footer>
  </div>
</template>

<style>
body { margin: 0; overflow: hidden; }
</style>
<style scoped>
* { box-sizing: border-box; }
.app { width: 1920px; height: 1080px; display: flex; flex-direction: column; background: #f5f5f5; font: 12px/1 "Open Sans", "Noto Sans", sans-serif; color: #333; overflow: hidden; white-space: nowrap; }
svg { flex: none; display: block; overflow: visible; }
ul, h2, h4, h5 { margin: 0; padding: 0; list-style: none; font-weight: 400; }

.titlebar { height: 23px; background: #fff; display: flex; align-items: center; padding: 0 0 0 3px; color: #000; }
.wtitle { margin-left: 5px; font-size: 12px; letter-spacing: -.34px; }
.winbtns { margin-left: auto; }
.menubar { height: 20px; background: #fff; display: flex; align-items: center; padding: 1px 0 0 8px; color: #000; font-size: 12px; letter-spacing: -.25px; }
.menubar span { flex: none; }

.toolbar { height: 41px; display: flex; align-items: center; border-top: 1px solid #eee; }
.tool { width: 22px; height: 30px; display: flex; align-items: center; justify-content: center; flex: none; fill: none; stroke: #666; }
.tool.on { width: 30px; background: #e6e6e6; }
.sep { width: 1px; height: 35px; background: #d4d4d4; }
.caret { width: 6px; height: 4px; background: #666; clip-path: polygon(0 0, 100% 0, 50% 100%); flex: none; }
.caret.dim { background: #b4b4b4; }
.caret.big { width: 7px; height: 5px; }
.combo { width: 104px; height: 23px; border: 1px solid #d4d4d4; border-radius: 2px; display: flex; justify-content: flex-end; align-items: center; padding-right: 5px; }
.combo i { border: 4px solid transparent; border-top-color: #c8c8c8; border-bottom: 0; }
.sign { margin-left: auto; }
.bars { margin-left: 17px; }
.showme { margin: 0 28px 2px 5px; font-size: 13px; width: 55px; letter-spacing: -.1px; }

.work { height: 905px; display: flex; flex: none; }
.side { width: 210px; background: #fff; border-right: 1px solid #d4d4d4; border-top: 1px solid #d4d4d4; display: flex; flex-direction: column; }
.sidetabs { height: 26px; display: flex; font-size: 13px; }
.tdata { width: 77px; padding: 6px 0 0 18px; font-weight: 700; color: #111; letter-spacing: -.3px; }
.tana { flex: 1; background: #fafafa; border-left: 1px solid #d4d4d4; border-bottom: 1px solid #d4d4d4; padding: 6px 6px 0 13px; display: flex; justify-content: space-between; letter-spacing: -.02px; }
.source { height: 30px; border-bottom: 1px solid #e2e2e2; display: flex; align-items: center; gap: 4px; padding-left: 22px; font-size: 12.5px; color: #555; letter-spacing: -.22px; }
.searchrow { margin-top: 8px; height: 23px; display: flex; align-items: center; padding-left: 8px; }
.search { width: 130px; height: 23px; border: 1px solid #c4c4c4; border-radius: 2px; display: flex; justify-content: space-between; align-items: center; padding: 0 6px; color: #aaa; font-size: 12px; }
.funnel { margin-left: 4px; }
.vline { width: 1px; height: 18px; background: #d4d4d4; margin: 0 5px; }
.searchrow .caret { margin-left: 9px; }
h4 { font-size: 13px; font-weight: 700; color: #111; padding-left: 18px; letter-spacing: -.2px; }
.side > h4 { margin-top: 10px; height: 19px; }
.fields li { height: 21px; display: flex; align-items: center; padding-left: 22px; gap: 11px; font-size: 12px; color: #333; fill: none; stroke: #2f7a9e; }
.fields span { letter-spacing: -.05px; }
.fields span.it { font-style: italic; letter-spacing: .36px; }
.fields .abc { width: 16px; margin: 0 0 0 -1px; font-size: 9px; font-weight: 700; color: #2f7a9e; }
.fields.dims { margin: 0 7px 0 0; height: 86px; border-bottom: 1px solid #d4d4d4; }
.fields.mea li, .fields.mea2 li { stroke: #3a9e7b; }
.params { margin-top: auto; height: 310px; border-top: 1px solid #d4d4d4; padding-top: 5px; }
.params .fields { padding-top: 6px; }

.cards { width: 154px; margin-left: 6px; display: flex; flex-direction: column; gap: 6px; }
.card { border: 1px solid #d0d0d0; background: #fafafa; }
h5 { font-size: 12px; color: #555; letter-spacing: .05px; }
.card h5 { padding: 9px 0 0 6px; }
.pages { height: 62px; }
.filters { height: 78px; }
.filters .pill { margin: 11px 4px 0; }
.marks { height: 242px; }
.pill { height: 20px; border-radius: 10px; color: #fff; font-size: 12px; font-weight: 500; line-height: 20px; padding-left: 11px; letter-spacing: .5px; }
.blue { background: #4996b2; }
.green { background: #00b180; }
.marktype { margin: 14px 6px 0; height: 21px; border: 1px solid #c8c8c8; border-radius: 2px; display: flex; align-items: center; padding-left: 11px; color: #555; }
.marktype span { margin-left: 4px; }
.marktype b { margin-left: auto; width: 19px; height: 19px; border-left: 1px solid #d4d4d4; display: flex; align-items: center; justify-content: center; }
.mbtns { display: grid; grid-template-columns: 43px 42px 43px; gap: 6px; margin: 6px 0 0 6px; }
.mbtns > div { height: 42px; border: 1px solid #d0d0d0; display: flex; flex-direction: column; align-items: center; padding-top: 5px; font-size: 11px; color: #444; gap: 5px; letter-spacing: -.1px; }
.enc { display: flex; align-items: center; gap: 3px; padding: 0 10px 0 12px; margin-top: 3px; }
.mbtns + .enc { margin-top: 9px; }
.enc .pill { flex: 1; }

.main { flex: 1; margin: 0 6px 0 6px; display: flex; flex-direction: column; }
.shelf { height: 28px; margin-bottom: 6px; border: 1px solid #d0d0d0; background: #fafafa; display: flex; align-items: center; gap: 2px; }
.sname { width: 125px; height: 26px; border-right: 1px solid #d4d4d4; display: flex; align-items: center; gap: 7px; padding-left: 6px; color: #555; font-size: 12px; }
.shelf .pill { width: 148px; letter-spacing: .03px; }
.shelf:nth-child(2) .pill { letter-spacing: .12px; }
.shelf .yr { display: flex; align-items: center; gap: 7px; letter-spacing: .5px; }
.lower { display: flex; justify-content: space-between; align-items: flex-start; }
.view { width: 1378px; height: 831px; background: #fff; border: 1px solid #d0d0d0; padding: 0 5px 0 6px; }
h2 { height: 43px; padding: 15px 0 0 4px; font-size: 20px; line-height: 20px; font-weight: 300; color: #333; letter-spacing: .48px; }
.colhead { height: 41px; border-left: 1px solid #e6e6e6; border-right: 1px solid #e6e6e6; border-bottom: 1px solid #e0e0e0; margin-left: -1px; display: flex; flex-direction: column; align-items: center; padding-top: 5px; gap: 8px; font-size: 12px; color: #555; }
.colhead b { font-weight: 600; color: #444; }
.colhead span { letter-spacing: .5px; }
.mapbox { position: relative; height: 739px; background: #ececec; overflow: hidden; }
.lab { font-size: 12.5px; fill: #111; text-anchor: middle; font-family: "Open Sans", sans-serif; }
.credit { position: absolute; left: 0; bottom: 1px; height: 17px; line-height: 17px; background: #fafafa; padding: 0 4px; font-size: 11px; font-weight: 500; color: #444; width: 178px; letter-spacing: -.28px; }
.legend { width: 154px; height: 692px; background: #fff; border: 1px solid #d0d0d0; }
.legend h5 { height: 30px; background: #fafafa; padding: 9px 0 0 6px; letter-spacing: .25px; }
.legend li { height: 20px; display: flex; align-items: center; padding-left: 4px; gap: 5px; font-size: 12px; color: #555; }
.legend li i { width: 13px; height: 13px; border: 1px solid #666; }

.tabs { height: 31px; flex: none; background: #e6e6e6; border-top: 1px solid #c8c8c8; border-bottom: 1px solid #d0d0d0; display: flex; color: #666; font-size: 12px; line-height: 30px; letter-spacing: -.12px; }
.ds { width: 131px; display: flex; align-items: center; gap: 6px; padding-left: 9px; border-right: 1px solid #c8c8c8; letter-spacing: .02px; }
.active { width: 155px; background: #fafafa; padding-left: 6px; font-weight: 600; color: #444; border-right: 1px solid #d0d0d0; line-height: 28px; letter-spacing: .1px; }
.tab { flex: none; padding-left: 5px; border-right: 1px solid #ccc; overflow: hidden; }
.addtab { flex: 1; border-right: 1px solid #ccc; display: flex; align-items: center; justify-content: center; }
.status { height: 20px; flex: none; background: #ebebeb; display: flex; align-items: center; font-size: 11px; color: #222; padding: 0 1px 2px 3px; letter-spacing: -.1px; }
.status span { margin-right: 16px; }
.status i { height: 20px; border-left: 1px solid #d0d0d0; }
.status .c1 { margin-left: auto; width: 127px; }
.status .c2 { width: 27px; }
.status .c3 { width: 47px; }
.nav, .sorter { border-left: 1px solid #d0d0d0; }

.taskbar { height: 40px; flex: none; background: #010308; display: flex; color: #fff; }
.start { width: 48px; display: flex; align-items: center; justify-content: center; }
.cortana { width: 344px; background: #333; display: flex; align-items: center; padding: 0 15px 0 9px; color: #aaa; font-size: 14.500px; }
.cortana span { margin-left: 5px; flex: 1; }
.app-i { width: 49.200px; display: flex; align-items: center; justify-content: center; }
.app-i.run { box-shadow: inset 0 -2px #76b9ed; width: 41px; margin: 0 4.100px; }
.app-i.run.cur { width: 48px; margin: 0 .6px; background: #33363b; }
.tray { margin-left: auto; display: flex; align-items: center; gap: 9px; font-size: 12px; }
.clock { display: flex; flex-direction: column; align-items: center; gap: 6px; width: 54px; letter-spacing: -.4px; margin-left: -5px; }
.notif { margin-left: 7px; }
.tray i { width: 1px; height: 40px; background: #555; margin: 0 4px 0 0; }
</style>
